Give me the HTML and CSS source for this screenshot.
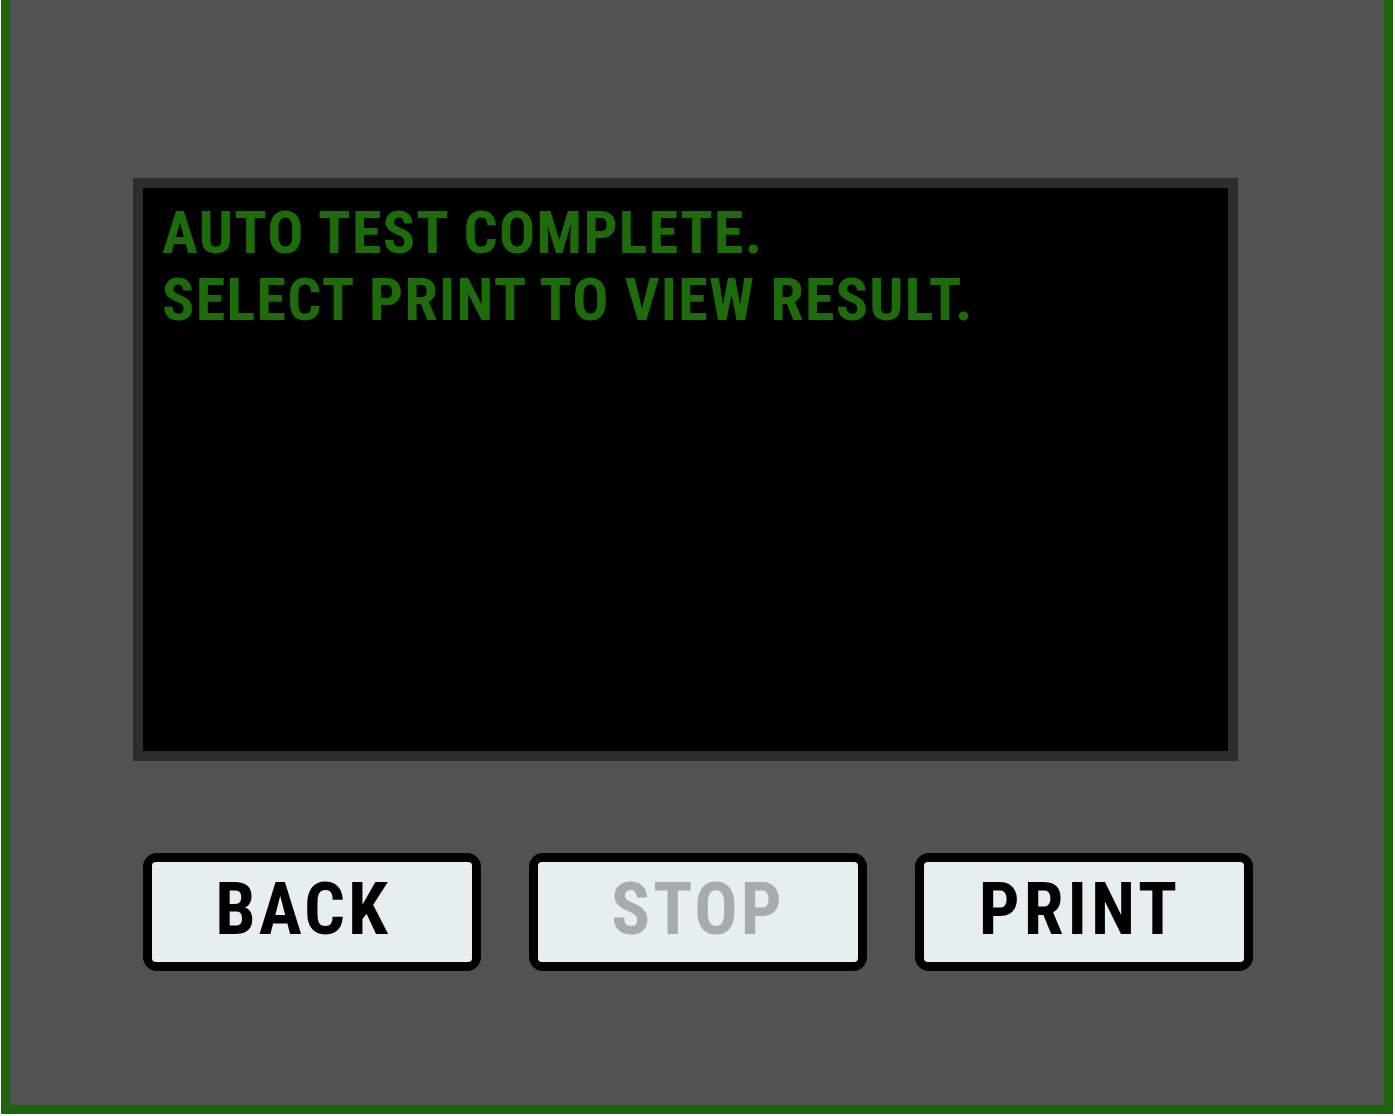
FILE: index.html
```html
<!DOCTYPE html>
<html>
<head>
<meta charset="utf-8">
<link rel="stylesheet" href="styles.css">
</head>
<body>
<div class="frame">
  <div class="screen">
    <div class="display">
      <div class="msg">AUTO TEST COMPLETE.</div>
      <div class="msg">SELECT PRINT TO VIEW RESULT.</div>
    </div>
  </div>
  <div class="buttons">
    <div class="btn"><span class="btn-face back">BACK</span></div>
    <div class="btn"><span class="btn-face stop disabled">STOP</span></div>
    <div class="btn"><span class="btn-face print">PRINT</span></div>
  </div>
</div>
</body>
</html>
```
FILE: styles.css
```css
html, body {
  margin: 0;
  padding: 0;
  background: #ffffff;
}
body {
  width: 1395px;
  height: 1116px;
  overflow: hidden;
}
.frame {
  margin-left: 1px;
  width: 1374px;
  height: 927px;
  background: #525252;
  border: 9px solid #1c650b;
  border-top: none;
  display: flex;
  flex-direction: column;
  padding-top: 178px;
  box-sizing: content-box;
  font-family: Roboto, "Open Sans", sans-serif;
  font-stretch: 75%;
}
.screen {
  margin-left: 123px;
  width: 1085px;
  height: 563px;
  border: 10px solid #2d2d2d;
  background: #000;
}
.display {
  padding: 11px 0 0 19px;
}
.msg {
  color: #1e6b0c;
  font-weight: bold;
  font-size: 60px;
  line-height: 67px;
  letter-spacing: 1.3px;
  white-space: nowrap;
}
.buttons {
  display: flex;
  gap: 48px;
  margin-top: 92px;
  margin-left: 133px;
}
.btn {
  width: 338px;
  height: 118px;
  box-sizing: border-box;
  border: 9px solid #000;
  border-radius: 14px;
  background: #000;
  display: flex;
}
.btn-face {
  flex: 1;
  background: #e6eef0;
  border-radius: 4px;
  display: flex;
  align-items: center;
  justify-content: center;
  font-weight: bold;
  font-size: 72px;
  letter-spacing: 3px;
  color: #000;
  padding-bottom: 5px;
}
.btn-face.back { padding-right: 18px; }
.btn-face.stop { padding-right: 0; }
.btn-face.print { padding-right: 8px; letter-spacing: 4px; }
.btn-face.disabled {
  color: #a6abab;
}
```
